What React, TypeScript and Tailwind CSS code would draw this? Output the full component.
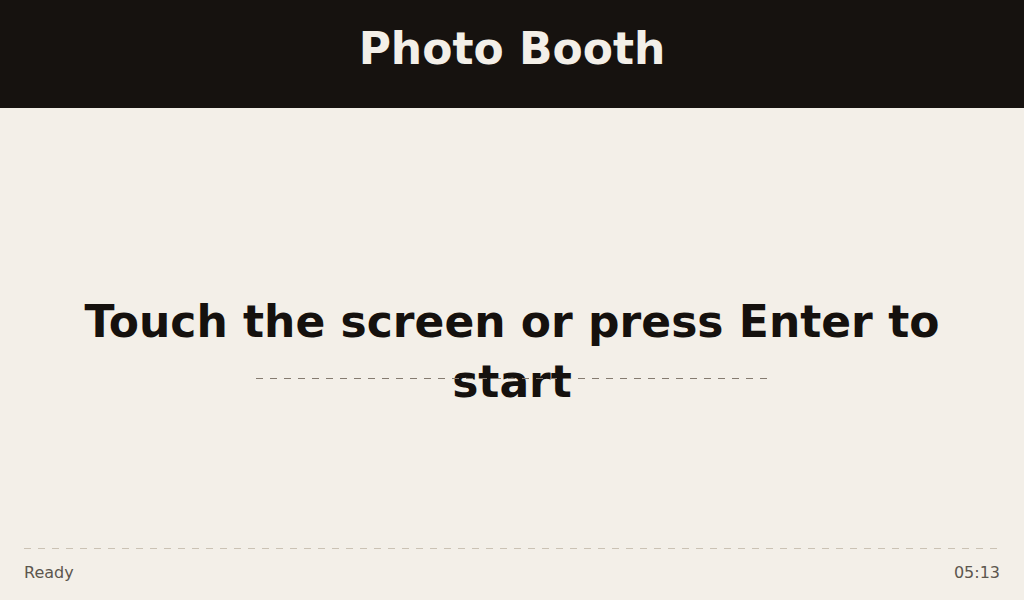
export default function App() {
    return (
        <div
            className="flex flex-col w-screen h-screen bg-[#f3efe8] overflow-hidden"
            style={{ fontFamily: '"DejaVu Sans", sans-serif' }}
        >
            <header className="bg-[#16120f] h-[108px] flex justify-center pt-[27px]">
                <h1 className="text-[44px] leading-[44px] font-bold text-[#f3efe8]">
                    Photo Booth
                </h1>
            </header>

            <main className="flex-1 flex flex-col items-center justify-center pt-[48px]">
                <div className="relative w-full px-[60px]">
                    <p className="text-center text-[44px] leading-[60px] font-bold text-[#15110e]">
                        Touch the screen or press Enter to start
                    </p>
                    {/* dashed guide sits over the text */}
                    <div className="absolute left-1/4 right-1/4 top-[86px] h-px bg-[repeating-linear-gradient(to_right,#857b70_0_7px,transparent_7px_14px)]" />
                </div>
            </main>

            <footer className="mx-6 pb-[17px]">
                <div className="h-px bg-[repeating-linear-gradient(to_right,#cbc2b4_0_7px,transparent_7px_14px)]" />
                <div className="flex justify-between pt-[14px] text-[16px] leading-[20px] text-[#5c564e]">
                    <span>Ready</span>
                    <span>05:13</span>
                </div>
            </footer>
        </div>
    );
}
